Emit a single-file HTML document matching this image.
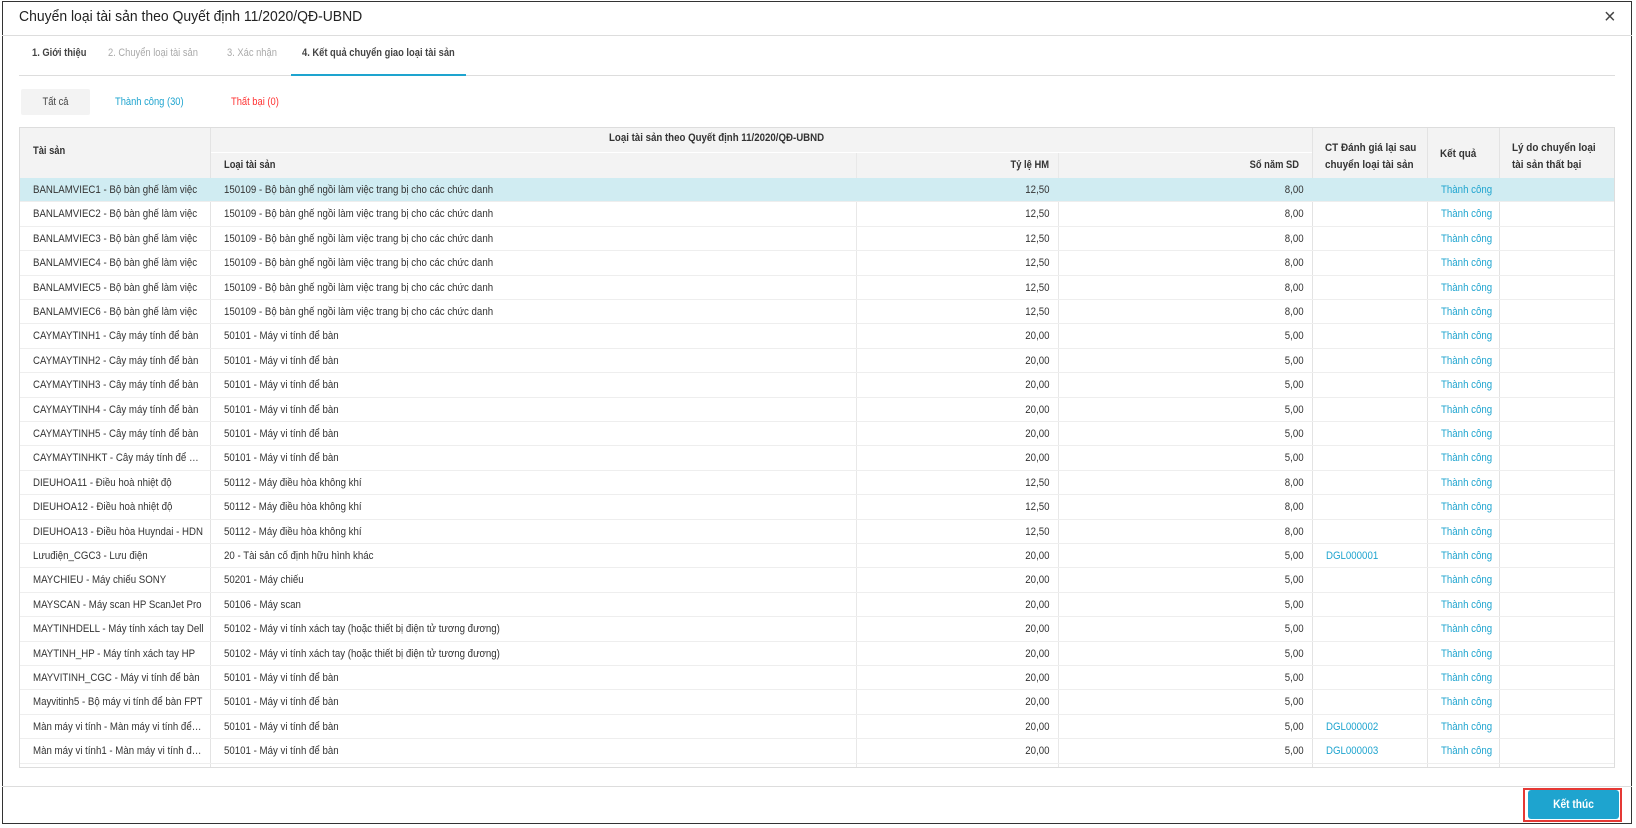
<!DOCTYPE html>
<html><head><meta charset="utf-8"><style>
*{box-sizing:border-box;margin:0;padding:0}
body{width:1636px;height:828px;background:#fff;font-family:"Liberation Sans",sans-serif;color:#333;position:relative;overflow:hidden;font-size:11px}
.dlg{position:absolute;left:2px;top:1px;width:1630px;height:823px;border:1px solid #333}
.a{position:absolute;white-space:nowrap}
.s{transform:scaleX(.85);transform-origin:left center}
.sr{transform:scaleX(.85);transform-origin:right center}
.sc{transform:scaleX(.85);transform-origin:center center}
.cell{position:absolute;overflow:hidden;white-space:nowrap;line-height:24px}
.cell span{display:block;overflow:hidden;text-overflow:ellipsis;white-space:nowrap}
.cell .s{transform:scaleX(.88)}
.cell .sr{transform:scaleX(.88)}
.blue{color:#1ea4cf}
</style></head><body>
<div class="dlg"></div>
<div class="a s" style="left:19px;top:8px;font-size:15px;color:#222;transform:scaleX(.93)">Chuyển loại tài sản theo Quyết định 11/2020/QĐ-UBND</div>
<div class="a" style="left:1604px;top:6px;font-size:20px;color:#444">×</div>
<div class="a" style="left:2px;top:35px;width:1630px;height:1px;background:#ddd"></div>
<div class="a s" style="left:32px;top:47px;font-weight:bold;color:#444">1. Giới thiệu</div>
<div class="a s" style="left:108px;top:47px;color:#aaa">2. Chuyển loại tài sản</div>
<div class="a s" style="left:227px;top:47px;color:#aaa">3. Xác nhận</div>
<div class="a s" style="left:302px;top:47px;font-weight:bold;color:#444">4. Kết quả chuyển giao loại tài sản</div>
<div class="a" style="left:19px;top:75px;width:1596px;height:1px;background:#ddd"></div>
<div class="a" style="left:291px;top:74px;width:175px;height:2px;background:#1ea4cf"></div>
<div class="a" style="left:21px;top:89px;width:69px;height:26px;background:#f3f3f3;border-radius:2px"></div>
<div class="a sc" style="left:21px;top:96px;width:69px;text-align:center;color:#444">Tất cả</div>
<div class="a s blue" style="left:115px;top:96px">Thành công (30)</div>
<div class="a s" style="left:231px;top:96px;color:#f33">Thất bại (0)</div>
<div class="a" style="left:19px;top:127px;width:1596px;height:641px;border:1px solid #ddd"></div>
<div class="a" style="left:20px;top:128px;width:1594px;height:50px;background:#f3f3f3"></div>
<div class="a" style="left:210px;top:152px;width:1102px;height:1px;background:#fff"></div>
<div id="lines"></div>
<div class="a s" style="left:33px;top:145px;font-weight:bold">Tài sản</div>
<div class="a s" style="left:609px;top:132px;font-weight:bold;transform:scaleX(.88)">Loại tài sản theo Quyết định 11/2020/QĐ-UBND</div>
<div class="a s" style="left:224px;top:159px;font-weight:bold">Loại tài sản</div>
<div class="a sr" style="left:856px;top:159px;width:193px;text-align:right;font-weight:bold">Tỷ lệ HM</div>
<div class="a sr" style="left:1058px;top:159px;width:241px;text-align:right;font-weight:bold">Số năm SD</div>
<div class="a s" style="left:1325px;top:140px;font-weight:bold;line-height:17px;transform:scaleX(.9)">CT Đánh giá lại sau<br>chuyển loại tài sản</div>
<div class="a s" style="left:1440px;top:148px;font-weight:bold;transform:scaleX(.9)">Kết quả</div>
<div class="a s" style="left:1512px;top:140px;font-weight:bold;line-height:17px;transform:scaleX(.9)">Lý do chuyển loại<br>tài sản thất bại</div>
<div id="rows"></div>
<div class="a" style="left:2px;top:786px;width:1630px;height:1px;background:#ddd"></div>
<div class="a" style="left:1523px;top:788px;width:99px;height:34px;border:2px solid #e53935"></div>
<div class="a" style="left:1528px;top:790px;width:91px;height:29px;background:#1ea4cf;border-radius:3px"></div>
<div class="a sc" style="left:1528px;top:790px;width:91px;color:#fff;font-weight:bold;text-align:center;line-height:29px;font-size:12px">Kết thúc</div>
<script>
const d=[
["BANLAMVIEC1 - Bộ bàn ghế làm việc","150109 - Bộ bàn ghế ngồi làm việc trang bị cho các chức danh","12,50","8,00",""],
["BANLAMVIEC2 - Bộ bàn ghế làm việc","150109 - Bộ bàn ghế ngồi làm việc trang bị cho các chức danh","12,50","8,00",""],
["BANLAMVIEC3 - Bộ bàn ghế làm việc","150109 - Bộ bàn ghế ngồi làm việc trang bị cho các chức danh","12,50","8,00",""],
["BANLAMVIEC4 - Bộ bàn ghế làm việc","150109 - Bộ bàn ghế ngồi làm việc trang bị cho các chức danh","12,50","8,00",""],
["BANLAMVIEC5 - Bộ bàn ghế làm việc","150109 - Bộ bàn ghế ngồi làm việc trang bị cho các chức danh","12,50","8,00",""],
["BANLAMVIEC6 - Bộ bàn ghế làm việc","150109 - Bộ bàn ghế ngồi làm việc trang bị cho các chức danh","12,50","8,00",""],
["CAYMAYTINH1 - Cây máy tính để bàn","50101 - Máy vi tính để bàn","20,00","5,00",""],
["CAYMAYTINH2 - Cây máy tính để bàn","50101 - Máy vi tính để bàn","20,00","5,00",""],
["CAYMAYTINH3 - Cây máy tính để bàn","50101 - Máy vi tính để bàn","20,00","5,00",""],
["CAYMAYTINH4 - Cây máy tính để bàn","50101 - Máy vi tính để bàn","20,00","5,00",""],
["CAYMAYTINH5 - Cây máy tính để bàn","50101 - Máy vi tính để bàn","20,00","5,00",""],
["CAYMAYTINHKT - Cây máy tính để bàn","50101 - Máy vi tính để bàn","20,00","5,00",""],
["DIEUHOA11 - Điều hoà nhiệt độ","50112 - Máy điều hòa không khí","12,50","8,00",""],
["DIEUHOA12 - Điều hoà nhiệt độ","50112 - Máy điều hòa không khí","12,50","8,00",""],
["DIEUHOA13 - Điều hòa Huyndai - HDN","50112 - Máy điều hòa không khí","12,50","8,00",""],
["Lưuđiện_CGC3 - Lưu điện","20 - Tài sản cố định hữu hình khác","20,00","5,00","DGL000001"],
["MAYCHIEU - Máy chiếu SONY","50201 - Máy chiếu","20,00","5,00",""],
["MAYSCAN - Máy scan HP ScanJet Pro","50106 - Máy scan","20,00","5,00",""],
["MAYTINHDELL - Máy tính xách tay Dell","50102 - Máy vi tính xách tay (hoặc thiết bị điện tử tương đương)","20,00","5,00",""],
["MAYTINH_HP - Máy tính xách tay HP","50102 - Máy vi tính xách tay (hoặc thiết bị điện tử tương đương)","20,00","5,00",""],
["MAYVITINH_CGC - Máy vi tính để bàn","50101 - Máy vi tính để bàn","20,00","5,00",""],
["Mayvitinh5 - Bộ máy vi tính để bàn FPT","50101 - Máy vi tính để bàn","20,00","5,00",""],
["Màn máy vi tính - Màn máy vi tính để bàn","50101 - Máy vi tính để bàn","20,00","5,00","DGL000002"],
["Màn máy vi tính1 - Màn máy vi tính để bàn","50101 - Máy vi tính để bàn","20,00","5,00","DGL000003"]];
const X=[20,210,856,1058,1312,1427,1499,1614];
let h='',H=24.4,K=0.88;
d.forEach((r,i)=>{const y=178+i*H;
if(i==0)h+=`<div class="a" style="left:20px;top:${y}px;width:1594px;height:${H}px;background:#d0ecf2"></div>`;
h+=`<div class="a" style="left:20px;top:${y+H-1}px;width:1594px;height:1px;background:#eee"></div>`;
const v=[r[0],r[1],r[2],r[3],r[4],"Thành công",""];
for(let c=0;c<7;c++){
 const pl=c==0?13:14, pr=c==0?6:(c==5?2:(c==2||c==3?8:14)), w=X[c+1]-X[c]-pl-pr;
 const right=(c==2||c==3);
 const cls='cell'+((c==4||c==5)?' blue':'');
 h+=`<div class="${cls}" style="left:${X[c]+pl}px;top:${y}px;width:${w}px;height:${H}px"><span class="${right?'sr':'s'}" style="width:${w/K}px;${right?'margin-left:'+(w-w/K)+'px;text-align:right':''}">${v[c]}</span></div>`;}
});
document.getElementById('rows').innerHTML=h;
let l='';
[[210,128],[856,153],[1058,153],[1312,128],[1427,128],[1499,128]].forEach(([x,t])=>{l+=`<div class="a" style="left:${x}px;top:${t}px;width:1px;height:${767-t}px;background:${t==128?'#e3e3e3':'#e8e8e8'}"></div>`});
document.getElementById('lines').innerHTML=l;
</script>
</body></html>
